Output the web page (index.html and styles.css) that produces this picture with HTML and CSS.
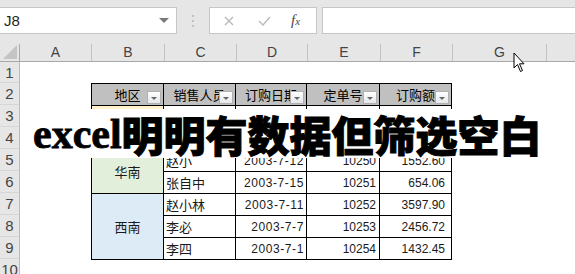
FILE: index.html
```html
<!DOCTYPE html>
<html lang="zh-CN">
<head>
    <meta charset="UTF-8">
    <meta name="viewport" content="width=device-width, initial-scale=1.0">
    <title>excel明明有数据但筛选空白</title>
    <link rel="stylesheet" href="styles.css">
</head>
<body>
<div class="app">
    <div class="formula-bar">
        <div class="name-box">
            <span>J8</span>
            <span class="caret"></span>
        </div>
        <div class="grip">
            <svg width="4" height="14" viewBox="0 0 4 14"><circle cx="2" cy="2" r="1" fill="#b4b4b4"/><circle cx="2" cy="7" r="1" fill="#b4b4b4"/><circle cx="2" cy="12" r="1" fill="#b4b4b4"/></svg>
        </div>
        <div class="fx-buttons">
            <svg class="btn-x" width="10" height="10" viewBox="0 0 10 10"><path d="M1 1 L9 9 M9 1 L1 9" stroke="#b8b8b8" stroke-width="1.3" fill="none"/></svg>
            <svg class="btn-ok" width="13" height="10" viewBox="0 0 13 10"><path d="M1 5 L5 9 L12 1" stroke="#b8b8b8" stroke-width="1.3" fill="none"/></svg>
            <span class="fx">f<small>x</small></span>
        </div>
        <div class="formula-input"></div>
    </div>

    <div class="col-heads">
        <div class="corner">
            <svg width="14" height="14" viewBox="0 0 14 14"><path d="M14 0 L14 14 L0 14 Z" fill="#c4c4c4"/></svg>
        </div>
        <div>A</div>
        <div>B</div>
        <div>C</div>
        <div>D</div>
        <div>E</div>
        <div>F</div>
        <div>G</div>
        <div></div>
    </div>

    <div class="sheet-body">
        <div class="row-heads">
            <div class="rh first">1</div>
            <div class="rh">2</div>
            <div class="rh">3</div>
            <div class="rh">4</div>
            <div class="rh">5</div>
            <div class="rh">6</div>
            <div class="rh">7</div>
            <div class="rh">8</div>
            <div class="rh">9</div>
            <div class="rh">10</div>
        </div>

        <div class="cells">
            <div class="data">
                <div class="th">地区<span class="filter"></span></div>
                <div class="th">销售人员<span class="filter"></span></div>
                <div class="th">订购日期<span class="filter"></span></div>
                <div class="th">定单号<span class="filter"></span></div>
                <div class="th">订购额<span class="filter"></span></div>

                <!-- rows 3-4 sit under the caption -->
                <div class="region north span2"></div>
                <div></div>
                <div></div>
                <div></div>
                <div></div>
                <div></div>
                <div></div>
                <div></div>
                <div></div>

                <div class="region south span2">华南</div>
                <div class="name">赵小</div>
                <div class="date">2003-7-12</div>
                <div class="num">10250</div>
                <div class="amt">1552.60</div>
                <div class="name">张自中</div>
                <div class="date">2003-7-15</div>
                <div class="num">10251</div>
                <div class="amt">654.06</div>

                <div class="region west span3">西南</div>
                <div class="name">赵小林</div>
                <div class="date">2003-7-11</div>
                <div class="num">10252</div>
                <div class="amt">3597.90</div>
                <div class="name">李必</div>
                <div class="date">2003-7-7</div>
                <div class="num">10253</div>
                <div class="amt">2456.72</div>
                <div class="name">李四</div>
                <div class="date">2003-7-1</div>
                <div class="num">10254</div>
                <div class="amt">1432.45</div>
            </div>
        </div>
    </div>

    <!-- caption laid over the sheet -->
    <div class="caption">
        <span class="caption-en">excel</span><span class="caption-zh">明明有数据但筛选空白</span>
    </div>

    <svg class="pointer" width="13" height="21" viewBox="0 0 13 21">
        <path d="M1 1 L1 16 L4.5 12.5 L7.5 19.5 L9.5 18.5 L6.5 11.8 L11 11.8 Z" fill="#fff" stroke="#000" stroke-width="1" stroke-linejoin="round"/>
    </svg>
</div>
</body>
</html>
```

FILE: styles.css
```css
body {
    margin: 0;
    font-family: "Liberation Sans", "Noto Sans CJK SC", sans-serif;
    background-color: #fff;
}

.app {
    position: relative;
    width: 575px;
    height: 274px;
    overflow: hidden;
}

/* formula bar */
.formula-bar {
    height: 44px;
    box-sizing: border-box;
    padding-top: 7px;
    background-color: #e6e6e6;
    display: flex;
    align-items: flex-start;
}

.name-box {
    width: 177px;
    height: 27px;
    box-sizing: border-box;
    background: #fff;
    border: 1px solid #c6c6c6;
    border-left: none;
    display: flex;
    align-items: center;
    justify-content: space-between;
    padding: 0 7px 0 4px;
    font-size: 15px;
    color: #262626;
}

.caret {
    width: 0;
    height: 0;
    border-left: 5px solid transparent;
    border-right: 5px solid transparent;
    border-top: 5px solid #7a7a7a;
}

.grip {
    width: 32px;
    height: 27px;
    display: flex;
    align-items: center;
    justify-content: center;
}

.fx-buttons {
    width: 108px;
    height: 27px;
    box-sizing: border-box;
    background: #fff;
    border: 1px solid #c6c6c6;
    display: flex;
    align-items: center;
}

.btn-x {
    margin-left: 14px;
}

.btn-ok {
    margin-left: 24px;
}

.fx {
    margin-left: 20px;
    font-family: "Liberation Serif", serif;
    font-style: italic;
    font-size: 15px;
    color: #4a4a4a;
}

.fx small {
    font-size: 11px;
}

.formula-input {
    flex: 1;
    margin-left: 5px;
    height: 27px;
    box-sizing: border-box;
    background: #fff;
    border: 1px solid #c6c6c6;
    border-right: none;
}

/* column headers */
.col-heads {
    display: grid;
    grid-template-columns: 20px 72px 73px 72px 71px 73px 72px 94px 72px;
    height: 18px;
    box-sizing: border-box;
    background-color: #e6e6e6;
    border-bottom: 1px solid #a8a8a8;
    font-size: 14px;
    color: #444;
}

.col-heads > div {
    border-right: 1px solid #c2c2c2;
    text-align: center;
    line-height: 17px;
}

.col-heads .corner {
    display: flex;
    align-items: flex-end;
    justify-content: flex-end;
    padding: 0 2px 2px 0;
    box-sizing: border-box;
    border-right-color: #a8a8a8;
}

/* sheet */
.sheet-body {
    display: flex;
}

.row-heads {
    width: 20px;
    flex-shrink: 0;
    box-sizing: border-box;
    background-color: #e6e6e6;
    border-right: 1px solid #bcbcbc;
    display: flex;
    flex-direction: column;
}

.rh {
    height: 22px;
    box-sizing: border-box;
    border-bottom: 1px solid #d6d6d6;
    font-size: 15px;
    line-height: 21px;
    text-align: center;
    color: #444;
}

.rh.first {
    height: 21px;
}

.cells {
    flex: 1;
    display: grid;
    grid-template-columns: 71px 73px 72px 71px 73px 72px 94px 1fr;
    grid-template-rows: 21px repeat(9, 22px);
}

.data {
    grid-column: 2 / 7;
    grid-row: 2 / 10;
    display: grid;
    grid-template-columns: 72px 72px 71px 73px 72px;
    grid-template-rows: repeat(8, 22px);
    align-self: start;
    border-left: 1px solid #000;
    border-top: 1px solid #000;
    font-size: 13px;
    color: #1a1a1a;
}

.data > div {
    box-sizing: border-box;
    border-right: 1px solid #000;
    border-bottom: 1px solid #000;
    display: flex;
    align-items: center;
    white-space: nowrap;
    overflow: hidden;
}

.data .th {
    position: relative;
    justify-content: center;
    background-color: #c0c0c0;
    color: #000;
}

.filter {
    position: absolute;
    right: 2px;
    bottom: 1px;
    width: 14px;
    height: 13px;
    box-sizing: border-box;
    border: 1px solid #b0b0b0;
    background: linear-gradient(#ffffff, #e4e6ea);
}

.filter::after {
    content: "";
    position: absolute;
    left: 3px;
    top: 5px;
    border-left: 3px solid transparent;
    border-right: 3px solid transparent;
    border-top: 3px solid #666;
}

.data .region {
    justify-content: center;
}

.span2 {
    grid-row: span 2;
}

.span3 {
    grid-row: span 3;
}

.north {
    background-color: #fff2cc;
}

.south {
    background-color: #e2efda;
}

.west {
    background-color: #ddebf7;
}

.data .name {
    padding-left: 2px;
}

.data .date {
    justify-content: flex-end;
    padding-right: 2px;
    font-size: 12px;
    letter-spacing: 0.6px;
}

.data .num {
    justify-content: flex-end;
    padding-right: 3px;
    font-size: 12px;
}

.data .amt {
    justify-content: flex-end;
    padding-right: 6px;
    font-size: 12px;
}

/* caption over the sheet */
.caption {
    position: absolute;
    left: 24px;
    top: 109px;
    width: 527px;
    height: 49px;
    box-sizing: border-box;
    padding-left: 9px;
    background: #fff;
    border-radius: 18px 26px 22px 14px / 10px 24px 20px 16px;
    display: flex;
    align-items: center;
    white-space: nowrap;
    color: #000;
}

.caption-en {
    font-family: "Liberation Serif", serif;
    font-weight: bold;
    font-size: 42px;
    -webkit-text-stroke: 0.8px #000;
}

.caption-zh {
    font-family: "Noto Sans CJK SC", sans-serif;
    font-weight: 900;
    font-size: 42px;
    -webkit-text-stroke: 1px #000;
}

.pointer {
    position: absolute;
    left: 513px;
    top: 52px;
}
```
